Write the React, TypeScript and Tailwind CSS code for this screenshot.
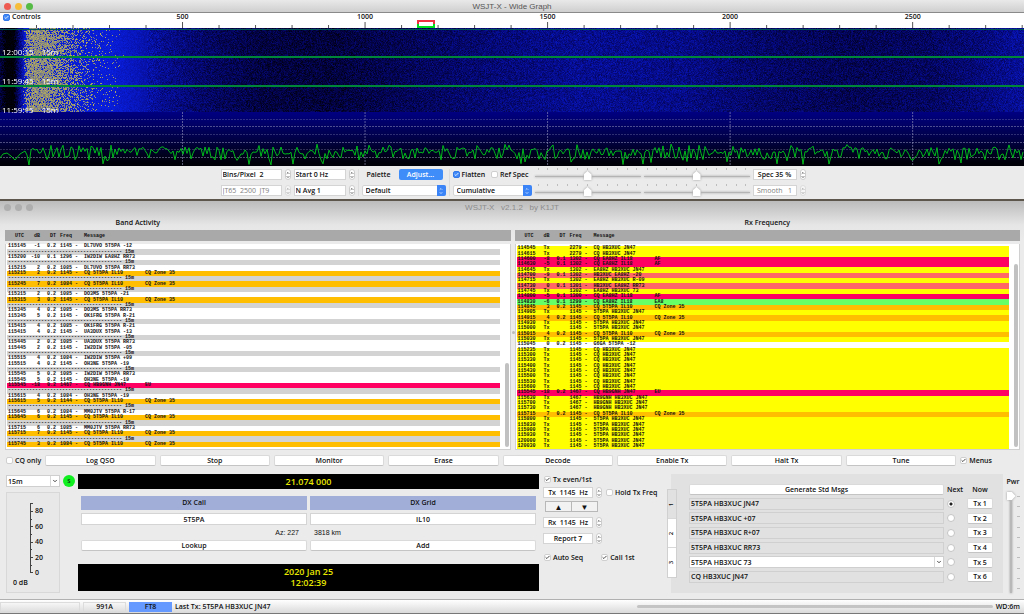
import { useLayoutEffect, useRef } from 'react';
import type { ReactNode } from 'react';
import { Check, ChevronDown, ChevronUp } from 'lucide-react';
import { clsx } from 'clsx';

const MAX_HZ = 2805;
const MINOR_TICKS = Array.from({ length: 28 }, (_, i) => (i + 1) * 100);
const MAJOR_TICKS = [500, 1000, 1500, 2000, 2500];
const SWEEPS = ['12:00:15', '11:59:45', '11:59:15'];

const SEPARATOR = '-'.repeat(38) + ' 15m';

type Tone = 'cq' | 'dxcc' | 'mycall' | 'grid' | 'tx';
type Row = [utc: string, db: string, dt: string, freq: string, message: string, note?: string, tone?: Tone];

const TONES: Record<Tone, string> = {
  cq: 'bg-[#ffbf00]',
  dxcc: 'bg-[#ff0062]',
  mycall: 'bg-[#ff6666]',
  grid: 'bg-[#66ff66]',
  tx: 'bg-[#ffff00]',
};

const cq = (utc: string, db: string, freq: string): Row => [utc, db, '0.2', freq, 'CQ 5T5PA IL10', 'CQ Zone 35', 'cq'];
const tx = (utc: string, freq: string, message: string): Row => [utc, 'Tx', '', freq, message, '', 'tx'];

const BAND_ACTIVITY: (Row | null)[] = [
  ['115145', '-1', '0.2', '1145', 'DL7UVO 5T5PA -12'],
  null,
  ['115200', '-10', '0.1', '1296', 'IW2DIW EA8HZ RR73'],
  null,
  ['115215', '2', '0.2', '1085', 'DL7UVO 5T5PA RR73'],
  cq('115215', '2', '1145'),
  null,
  cq('115245', '7', '1084'),
  null,
  ['115315', '2', '0.2', '1085', 'DO3MS 5T5PA -21'],
  cq('115315', '3', '1145'),
  null,
  ['115345', '4', '0.2', '1085', 'DO3MS 5T5PA RR73'],
  ['115345', '5', '0.2', '1145', 'OK1FRG 5T5PA R-21'],
  null,
  ['115415', '4', '0.2', '1085', 'OK1FRG 5T5PA R-21'],
  ['115415', '4', '0.2', '1145', 'UA3DUX 5T5PA -13'],
  null,
  ['115445', '2', '0.2', '1085', 'UA3DUX 5T5PA RR73'],
  ['115445', '2', '0.2', '1145', 'IW2DIW 5T5PA -05'],
  null,
  ['115515', '4', '0.2', '1084', 'IW2DIW 5T5PA +09'],
  ['115515', '4', '0.2', '1145', 'OH3NE 5T5PA -19'],
  null,
  ['115545', '5', '0.2', '1085', 'IW2DIW 5T5PA RR73'],
  ['115545', '5', '0.2', '1145', 'OH3NE 5T5PA -19'],
  ['115545', '-18', '0.2', '1467', 'CQ HB9GNH JN47', 'EU', 'dxcc'],
  null,
  ['115615', '4', '0.2', '1084', 'OH3NE 5T5PA -19'],
  cq('115615', '5', '1144'),
  null,
  ['115645', '6', '0.2', '1084', 'MM0JTV 5T5PA R-17'],
  cq('115645', '6', '1145'),
  null,
  ['115715', '6', '0.2', '1085', 'MM0JTV 5T5PA RR73'],
  cq('115715', '7', '1145'),
  null,
  cq('115745', '3', '1084'),
];

const RX_FREQUENCY: (Row | null)[] = [
  tx('114545', '2279', 'CQ HB3XUC JN47'),
  tx('114615', '2279', 'CQ HB3XUC JN47'),
  ['114600', '-8', '0.1', '1302', 'CQ EA8HZ IL18', 'AF', 'dxcc'],
  ['114630', '-5', '0.1', '1302', 'CQ EA8HZ IL18', 'AF', 'dxcc'],
  tx('114645', '1302', 'EA8HZ HB3XUC JN47'),
  ['114700', '-9', '0.1', '1302', 'HB3XUC EA8HZ -20', '', 'mycall'],
  tx('114715', '1302', 'EA8HZ HB3XUC R-09'),
  ['114730', '0', '0.1', '1301', 'HB3XUC EA8HZ RR73', '', 'mycall'],
  tx('114745', '1302', 'EA8HZ HB3XUC 73'),
  ['114800', '-5', '0.1', '1300', 'CQ EA8HZ IL18', 'AF', 'dxcc'],
  ['114830', '-6', '0.1', '1299', 'CQ EA8HZ IL18', 'EA8', 'grid'],
  cq('114845', '3', '1145'),
  tx('114905', '1145', '5T5PA HB3XUC JN47'),
  cq('114915', '4', '1145'),
  tx('114930', '1145', '5T5PA HB3XUC JN47'),
  tx('115000', '1145', '5T5PA HB3XUC JN47'),
  cq('115015', '4', '1145'),
  tx('115030', '1145', '5T5PA HB3XUC JN47'),
  ['115045', '0', '0.2', '1145', 'G6GA 5T5PA -12'],
  tx('115235', '1145', 'CQ HB3XUC JN47'),
  tx('115300', '1145', 'CQ HB3XUC JN47'),
  tx('115330', '1145', 'CQ HB3XUC JN47'),
  tx('115400', '1145', 'CQ HB3XUC JN47'),
  tx('115430', '1145', 'CQ HB3XUC JN47'),
  tx('115500', '1145', 'CQ HB3XUC JN47'),
  tx('115530', '1145', 'CQ HB3XUC JN47'),
  tx('115600', '1145', 'CQ HB3XUC JN47'),
  ['115545', '-18', '0.2', '1467', 'CQ HB9GNH JN47', 'EU', 'dxcc'],
  tx('115630', '1467', 'HB9GNH HB3XUC JN47'),
  tx('115700', '1467', 'HB9GNH HB3XUC JN47'),
  tx('115730', '1467', 'HB9GNH HB3XUC JN47'),
  cq('115715', '7', '1145'),
  tx('115800', '1145', '5T5PA HB3XUC JN47'),
  tx('115830', '1145', '5T5PA HB3XUC JN47'),
  tx('115900', '1145', '5T5PA HB3XUC JN47'),
  tx('115930', '1145', '5T5PA HB3XUC JN47'),
  tx('120000', '1145', '5T5PA HB3XUC JN47'),
  tx('120030', '1145', '5T5PA HB3XUC JN47'),
];

const MESSAGES = [
  '5T5PA HB3XUC JN47',
  '5T5PA HB3XUC +07',
  '5T5PA HB3XUC R+07',
  '5T5PA HB3XUC RR73',
  '5T5PA HB3XUC 73',
  'CQ HB3XUC JN47',
];

const BUTTONS = ['Log QSO', 'Stop', 'Monitor', 'Erase', 'Decode', 'Enable Tx', 'Halt Tx', 'Tune'];

// small seeded generator so the noise is the same on every render
function makeRandom(seed: number) {
  let s = seed;
  return () => {
    s = (s * 1664525 + 1013904223) >>> 0;
    return s / 4294967296;
  };
}

// [x, level] pairs, level 0 = black, 1 = full blue
const BLUE_PROFILE = [
  [0, 0.25], [4, 0.1], [6, 0], [13, 0], [19, 0.5], [25, 0.9], [110, 0.9], [135, 0.78], [165, 0.58],
  [210, 0.4], [260, 0.28], [330, 0.25], [400, 0.35], [480, 0.47], [580, 0.6], [680, 0.56],
  [760, 0.43], [850, 0.35], [930, 0.4], [980, 0.5], [1024, 0.64],
];

const YELLOW_PROFILE = [
  [0, 0], [22, 0], [27, 0.75], [36, 0.92], [48, 0.82], [62, 0.6], [78, 0.32], [98, 0.1], [125, 0], [1024, 0],
];

function sample(profile: number[][], x: number) {
  const i = profile.findIndex(([px]) => px > x);
  if (i < 1) return profile[profile.length - 1][1];
  const [x0, v0] = profile[i - 1];
  const [x1, v1] = profile[i];
  return v0 + ((x - x0) / (x1 - x0)) * (v1 - v0);
}

function Waterfall() {
  const ref = useRef<HTMLCanvasElement>(null);

  useLayoutEffect(() => {
    const ctx = ref.current?.getContext('2d');
    if (!ctx) return;
    const img = ctx.createImageData(1024, 84);
    const random = makeRandom(7);

    for (let y = 0; y < 84; y++) {
      for (let x = 0; x < 1024; x++) {
        const o = (y * 1024 + x) * 4;
        const blue = sample(BLUE_PROFILE, x);
        const spread = blue > 0.7 ? 0.1 : 0.22;
        const v = blue === 0 ? random() * 0.08 : Math.max(0, blue + (random() + random() - 1) * spread);
        let rgb = [v * 10, v * v * 36, Math.min(225, v * 240)];
        if (random() < sample(YELLOW_PROFILE, x)) {
          const k = 0.55 + random() * 0.45;
          rgb = [rgb[0] + (184 - rgb[0]) * k, rgb[1] + (176 - rgb[1]) * k, rgb[2] + (92 - rgb[2]) * k];
        }
        if (y === 1) rgb = [0, 84, 84];
        if (y === 28 || y === 29 || y === 57 || y === 58) rgb = [0, 134, 56];
        img.data.set([rgb[0], rgb[1], rgb[2], 255], o);
      }
    }
    ctx.putImageData(img, 0, 0);
  }, []);

  return (
    <div className='relative'>
      <canvas ref={ref} width={1024} height={84} className='block h-[84px] w-full' />
      <div className='absolute inset-x-0 top-0 grid auto-rows-[29px] text-[8px] font-medium text-white'>
        {SWEEPS.map((time) => (
          <p key={time} className='flex items-end gap-[8px] pl-[2px] leading-[11px]'>
            <span>{time}</span>
            <span>15m</span>
          </p>
        ))}
      </div>
    </div>
  );
}

function spectrumPath() {
  const random = makeRandom(21);
  const points = ['M0 46', 'L3 42', 'L7 41', 'L11 44', 'L15 48', 'L20 42', 'L25 39', 'L27 43', 'L29 53', 'L31 38'];
  for (let x = 33; x <= 1024; x += 2) {
    const r = random();
    let y = 35 + random() * 7;
    if (r > 0.62) y = 41 + random() * 7;
    if (r > 0.91) y = 46 + random() * 7;
    if (r < 0.06) y = 32 + random() * 3;
    points.push(`L${x} ${y.toFixed(1)}`);
  }
  return points.join(' ');
}

function Spectrum() {
  return (
    <svg viewBox='0 0 1024 54' preserveAspectRatio='none' className='block h-[54px] w-full'>
      <defs>
        <linearGradient id='floor' x1='0' y1='0' x2='0' y2='1'>
          <stop offset='0' stopColor='#000082' />
          <stop offset='0.5' stopColor='#000046' />
          <stop offset='0.95' stopColor='#000008' />
        </linearGradient>
      </defs>
      <rect width='1024' height='54' fill='url(#floor)' />
      <g stroke='#9a9ac0' strokeWidth='1' strokeDasharray='2 1'>
        {[8, 15, 23, 31, 38, 46].map((y, i) => (
          <line key={y} x1='0' x2='1024' y1={y - 0.5} y2={y - 0.5} opacity={i % 2 ? 0.5 : 0.3} />
        ))}
        {MAJOR_TICKS.map((hz) => (
          <line key={hz} x1={(hz / MAX_HZ) * 1024} x2={(hz / MAX_HZ) * 1024} y1='0' y2='54' opacity='0.6' />
        ))}
      </g>
      <path d={spectrumPath()} fill='none' stroke='#00cc1a' strokeWidth='0.9' />
    </svg>
  );
}

function Ruler() {
  return (
    <div className='relative h-[15px] overflow-hidden bg-white'>
      <svg className='absolute inset-0 h-full w-full' stroke='#555'>
        {MINOR_TICKS.map((hz) => (
          <line key={hz} x1={`${(hz / MAX_HZ) * 100}%`} x2={`${(hz / MAX_HZ) * 100}%`} y1={hz % 500 ? 12 : 9} y2='15' />
        ))}
      </svg>
      {MAJOR_TICKS.map((hz) => (
        <span
          key={hz}
          className='absolute top-0 -translate-x-1/2 leading-[8px]'
          style={{ left: `${(hz / MAX_HZ) * 100}%` }}
        >
          {hz}
        </span>
      ))}
      <svg viewBox='0 0 18 8' fill='none' strokeWidth='2' className='absolute top-[7px] left-[40.7%] h-[8px] w-[18px] bg-white'>
        <path d='M1 4V1H17V4' stroke='#f03040' />
        <path d='M1 4V7H17V4' stroke='#00e020' />
      </svg>
      <label className='absolute top-0 left-[3px] flex items-center gap-[2px] bg-white pr-1 leading-[8px]'>
        <Tick checked blue />
        Controls
      </label>
    </div>
  );
}

function Tick({ checked = false, blue = false }: { checked?: boolean; blue?: boolean }) {
  return (
    <span className='relative flex size-[7px] shrink-0'>
      <input
        type='checkbox'
        defaultChecked={checked}
        className={clsx(
          'size-[7px] appearance-none rounded-[2px] border',
          blue ? 'border-[#3478e8] bg-[#3f8af8]' : 'border-[#cfcfcf] bg-white',
        )}
      />
      {checked && (
        <Check
          strokeWidth={4}
          className={clsx('pointer-events-none absolute inset-px size-[5px]', blue ? 'text-white' : 'text-[#222]')}
        />
      )}
    </span>
  );
}

function CheckLabel({ children, ...props }: { children: ReactNode; checked?: boolean; blue?: boolean }) {
  return (
    <label className='flex items-center gap-[2px] whitespace-nowrap'>
      <Tick {...props} />
      {children}
    </label>
  );
}

function Stepper({ disabled = false }: { disabled?: boolean }) {
  return (
    <span
      className={clsx(
        'flex h-[11px] w-[6px] shrink-0 flex-col items-center justify-center rounded-[3px] border border-[#cdcdcd] bg-white',
        disabled && 'opacity-50',
      )}
    >
      <ChevronUp strokeWidth={4} className='size-[4px]' />
      <ChevronDown strokeWidth={4} className='size-[4px]' />
    </span>
  );
}

function Spin({ label, value, className, disabled = false }: { label: string; value: string; className: string; disabled?: boolean }) {
  return (
    <span className='flex items-center gap-[3px]'>
      <input
        aria-label={label}
        defaultValue={value}
        disabled={disabled}
        className={clsx('h-[11px] border border-[#d4d4d4] bg-white px-px', disabled && 'font-normal text-[#808080]', className)}
      />
      <Stepper disabled={disabled} />
    </span>
  );
}

function BlueSelect({ label, value, className }: { label: string; value: string; className: string }) {
  return (
    <span className={clsx('relative flex h-[11px] rounded-[2px] border border-[#d4d4d4] bg-white', className)}>
      <select aria-label={label} className='w-full appearance-none pl-[3px]'>
        <option>{value}</option>
      </select>
      <span className='pointer-events-none absolute -inset-y-px -right-px flex w-[9px] flex-col items-center justify-center rounded-r-[2px] bg-[#3a84f7] text-white'>
        <ChevronUp strokeWidth={4} className='size-[4px]' />
        <ChevronDown strokeWidth={4} className='size-[4px]' />
      </span>
    </span>
  );
}

function Combo({ label, value }: { label: string; value: string }) {
  return (
    <span className='relative flex h-[12px] w-full border border-[#cfcfcf] bg-white'>
      <select aria-label={label} className='w-full appearance-none pl-px'>
        <option>{value}</option>
      </select>
      <span className='pointer-events-none absolute inset-y-0 right-0 flex w-[9px] items-center justify-center border-l border-[#d8d8d8]'>
        <ChevronDown strokeWidth={3} className='size-[6px]' />
      </span>
    </span>
  );
}

function Slider({ label }: { label: string }) {
  return (
    <span className='flex h-[13px] w-[106px] flex-col justify-between'>
      <span className='flex justify-between px-[3px]'>
        {Array.from({ length: 11 }, (_, i) => (
          <i key={i} className='h-[2px] w-px bg-[#bdbdbd]' />
        ))}
      </span>
      <input
        type='range'
        aria-label={label}
        className='h-[9px] w-full appearance-none bg-transparent [filter:drop-shadow(0_0_1px_#999)] [&::-webkit-slider-runnable-track]:h-px [&::-webkit-slider-runnable-track]:bg-[#b4b4b4] [&::-webkit-slider-thumb]:-mt-[5px] [&::-webkit-slider-thumb]:h-[9px] [&::-webkit-slider-thumb]:w-[8px] [&::-webkit-slider-thumb]:appearance-none [&::-webkit-slider-thumb]:bg-white [&::-webkit-slider-thumb]:[clip-path:polygon(50%_0,100%_40%,100%_100%,0_100%,0_40%)]'
      />
    </span>
  );
}

function Button({ children, className }: { children: ReactNode; className?: string }) {
  return (
    <button className={clsx('h-[11px] rounded-[2px] border border-[#dadada] border-b-[#c4c4c4] bg-white leading-[9px]', className)}>
      {children}
    </button>
  );
}

function WideGraphControls() {
  return (
    <div className='flex h-[33px] items-center justify-center bg-[#ebebeb] pl-[2px]'>
      <div className='flex flex-col gap-[5px]'>
        <Spin label='Bins per pixel' value='Bins/Pixel  2' className='w-[61px] whitespace-pre' />
        <Spin label='Mode split' value='JT65  2500  JT9' className='w-[61px] whitespace-pre' disabled />
      </div>
      <div className='ml-[3px] flex flex-col gap-[5px]'>
        <Spin label='Start frequency' value='Start 0 Hz' className='w-[52px]' />
        <Spin label='Averages' value='N Avg 1' className='w-[52px]' />
      </div>
      <div className='ml-[3px] flex flex-col gap-[5px] border-x border-[#dcdcdc] px-[3px]'>
        <div className='flex items-center justify-between pr-[3px] pl-[5px]'>
          <span>Palette</span>
          <button className='h-[11px] w-[44px] rounded-[2px] bg-[#3f8df9] leading-[9px] text-white'>Adjust...</button>
        </div>
        <BlueSelect label='Palette' value='Default' className='w-[84px]' />
      </div>
      <div className='ml-[3px] flex flex-col gap-[5px]'>
        <div className='flex h-[11px] items-center justify-between pr-[3px]'>
          <CheckLabel checked blue>Flatten</CheckLabel>
          <CheckLabel>Ref Spec</CheckLabel>
        </div>
        <BlueSelect label='Spectrum mode' value='Cumulative' className='w-[79px]' />
      </div>
      <div className='mx-[3px] grid grid-cols-2 gap-x-[3px] gap-y-[3px]'>
        <Slider label='Waterfall gain' />
        <Slider label='Waterfall zero' />
        <Slider label='Spectrum gain' />
        <Slider label='Spectrum zero' />
      </div>
      <div className='flex flex-col gap-[5px]'>
        <Spin label='Spectrum height' value='Spec 35 %' className='w-[44px] text-center' />
        <Spin label='Smoothing' value='Smooth   1' className='w-[44px] text-center whitespace-pre' disabled />
      </div>
    </div>
  );
}

const LOG_GRID = 'grid grid-cols-[21px_11px_16px_16px_12px_61px_1fr] pl-px';

type LogProps = { title: string; rows: (Row | null)[]; titleClass?: string; thumb: string; body: string };

function Log({ title, rows, titleClass, thumb, body }: LogProps) {
  return (
    <section className='relative flex min-w-0 flex-1 flex-col'>
      <h2 className={clsx('flex h-[17px] items-center justify-center pt-px', titleClass)}>{title}</h2>
      <table className="flex flex-col gap-[3px] font-['Liberation_Mono',monospace] text-[5px] leading-[5px] font-bold">
        <thead className='bg-[#a9a9a9] px-[2px]'>
          <tr className={clsx(LOG_GRID, 'h-[11px] items-center pt-px')}>
            <th className='pr-[5px] text-right'>UTC</th>
            <th className='text-right'>dB</th>
            <th className='text-right'>DT</th>
            <th className='text-right'>Freq</th>
            <th />
            <th className='text-left'>Message</th>
          </tr>
        </thead>
        <tbody className={clsx('flex h-[206px] flex-col border border-t-0 border-[#d0d0d0] bg-white pr-[10px] pl-px', body)}>
          {rows.map((row, i) =>
            row ? (
              <tr key={i} className={clsx(LOG_GRID, 'min-h-0 flex-1 items-center', row[6] && TONES[row[6]])}>
                <td>{row[0]}</td>
                <td className='text-right'>{row[1]}</td>
                <td className='text-right'>{row[2]}</td>
                <td className='text-right'>{row[3]}</td>
                <td className='pl-[3px]'>-</td>
                <td className='whitespace-nowrap'>{row[4]}</td>
                <td>{row[5]}</td>
              </tr>
            ) : (
              <tr key={i} className='flex min-h-0 flex-1 items-center bg-[#d3d3d3] pl-px'>
                <td className='whitespace-nowrap'>{SEPARATOR}</td>
              </tr>
            ),
          )}
        </tbody>
      </table>
      <span className={clsx('absolute right-[2px] bottom-[3px] w-[4px] rounded-full bg-[#c1c1c1]', thumb)} />
    </section>
  );
}

function Meter() {
  return (
    <div className='flex h-[101px] flex-col border border-[#d8d8d8] bg-[#e8e8e8] pt-[8px] pl-[6px]'>
      <div className='flex gap-px pl-[16px]'>
        <svg width='5' height='76' stroke='#444' fill='none' className='mt-px'>
          <path d='M1.5 1V71M1 1.5H4M1 9.5H4M1 17.5H3M1 24.5H4M1 32.5H3M1 40.5H4M1 47.5H3M1 55.5H4M1 63.5H3M1 70.5H4' />
        </svg>
        <div className='flex h-[74px] flex-col justify-between pt-[5px] leading-[9px]'>
          {[80, 60, 40, 20, 0].map((n) => (
            <span key={n} className='h-[7px]'>{n}</span>
          ))}
        </div>
      </div>
      <span>0 dB</span>
    </div>
  );
}

function DxPanel() {
  return (
    <div className='flex min-w-0 flex-1 flex-col'>
      <p className='bg-black py-px text-center text-[9px] leading-[13px] text-[#e8e800]'>21.074 000</p>
      <div className='mt-[7px] mb-[13px] grid grid-cols-2 gap-[3px] px-[3px] text-center'>
        <label htmlFor='dx-call' className='bg-[#a0aed8] leading-[14px]'>DX Call</label>
        <label htmlFor='dx-grid' className='bg-[#a0aed8] leading-[14px]'>DX Grid</label>
        <input id='dx-call' defaultValue='5T5PA' className='h-[12px] min-w-0 border border-[#d4d4d4] bg-white text-center' />
        <input id='dx-grid' defaultValue='IL10' className='h-[12px] min-w-0 border border-[#d4d4d4] bg-white text-center' />
        <span className="pr-[8px] text-right font-['Liberation_Sans',sans-serif] font-normal">Az: 227</span>
        <span className="pl-[4px] text-left font-['Liberation_Sans',sans-serif] font-normal">3818 km</span>
        <Button>Lookup</Button>
        <Button>Add</Button>
      </div>
      <div className='flex flex-col items-center gap-px bg-black py-[3px] text-[9px] leading-[10px] text-[#e8e800]'>
        <span>2020 Jan 25</span>
        <span>12:02:39</span>
      </div>
    </div>
  );
}

function TxControls() {
  return (
    <div className='flex w-[120px] flex-col gap-[3px] pt-px'>
      <div className='pl-px'>
        <CheckLabel checked>Tx even/1st</CheckLabel>
      </div>
      <div className='flex items-center gap-[4px]'>
        <Spin label='Tx frequency' value='Tx  1145  Hz' className='w-[50px] whitespace-pre text-center' />
        <CheckLabel>Hold Tx Freq</CheckLabel>
      </div>
      <div className='mx-[2px] flex h-[11px] w-[53px] border border-[#b8b8b8] bg-[#f2f2f2] text-[8px] leading-[9px]'>
        <button aria-label='Tx to Rx frequency' className='flex-1 border-r border-[#b8b8b8]'>▲</button>
        <button aria-label='Rx to Tx frequency' className='flex-1'>▼</button>
      </div>
      <div className='flex flex-col gap-[5px] pt-[2px]'>
        <Spin label='Rx frequency' value='Rx  1145  Hz' className='w-[50px] whitespace-pre text-center' />
        <Spin label='Report' value='Report 7' className='w-[50px] text-center' />
      </div>
      <div className='mt-[6px] flex gap-[18px] pl-px'>
        <CheckLabel checked>Auto Seq</CheckLabel>
        <CheckLabel checked>Call 1st</CheckLabel>
      </div>
    </div>
  );
}

function Messages() {
  return (
    <div className='relative w-[332px] bg-[#e1e1e1] pt-[8px] pr-[10px] pl-[18px]'>
      <div className='absolute top-[15px] -left-[4px] flex w-[10px] flex-col border border-[#d0d0d0] text-[6px]'>
        {[1, 2, 3].map((n) => (
          <button
            key={n}
            className={clsx(
              'flex h-[29px] items-center justify-center border-b border-[#d8d8d8] last:border-b-0',
              n === 1 ? 'bg-[#e1e1e1]' : 'bg-white',
            )}
          >
            <span className='-rotate-90'>{n}</span>
          </button>
        ))}
      </div>
      <div className='grid h-[102px] auto-rows-fr grid-cols-[1fr_17px_26px] items-center gap-x-[3px]'>
        <Button>Generate Std Msgs</Button>
        <span>Next</span>
        <span className='text-center'>Now</span>
        {MESSAGES.map((text, i) => (
          <MessageRow key={text} text={text} index={i + 1} />
        ))}
      </div>
    </div>
  );
}

function MessageRow({ text, index }: { text: string; index: number }) {
  return (
    <>
      {index === 5 ? (
        <Combo label='Tx 5 message' value={text} />
      ) : (
        <input
          aria-label={`Tx ${index} message`}
          defaultValue={text}
          className='h-[12px] min-w-0 border border-[#d0d0d0] bg-[#e1e1e1] px-px'
        />
      )}
      <input
        type='radio'
        name='next'
        aria-label={`Next Tx ${index}`}
        defaultChecked={index === 1}
        className='size-[8px] appearance-none rounded-full border border-[#c4c4c4] bg-white checked:bg-[radial-gradient(#222_0_1px,#fff_2px)]'
      />
      <Button>Tx {index}</Button>
    </>
  );
}

function Power() {
  return (
    <label className='flex w-[20px] flex-col items-center gap-[6px] pt-[3px]'>
      Pwr
      <span className='flex gap-px'>
        <input
          type='range'
          defaultValue={100}
          className='h-[101px] w-[9px] appearance-none bg-[linear-gradient(to_right,transparent_3px,#b8b8b8_3px,#b8b8b8_5px,transparent_5px)] [filter:drop-shadow(0_0_1px_#999)] [direction:rtl] [writing-mode:vertical-lr] [&::-webkit-slider-thumb]:h-[8px] [&::-webkit-slider-thumb]:w-[9px] [&::-webkit-slider-thumb]:appearance-none [&::-webkit-slider-thumb]:bg-white [&::-webkit-slider-thumb]:[clip-path:polygon(0_0,60%_0,100%_50%,60%_100%,0_100%)]'
        />
        <span className='flex flex-col justify-between py-[4px]'>
          {Array.from({ length: 10 }, (_, i) => (
            <i key={i} className='h-px w-[3px] bg-[#bdbdbd]' />
          ))}
        </span>
      </span>
    </label>
  );
}

function TrafficLights({ colors }: { colors: string[] }) {
  return (
    <div className='absolute left-[4px] flex gap-[4px]'>
      {colors.map((c, i) => (
        <span key={i} className={clsx('size-[7px] rounded-full', c)} />
      ))}
    </div>
  );
}

function WideGraph() {
  return (
    <section>
      <header className='relative flex h-[13px] items-center justify-center border-b border-[#8a8a8a] bg-linear-to-b from-[#e9e9e9] to-[#cfcfcf]'>
        <TrafficLights colors={['bg-[#ee5b50]', 'bg-[#f6bd3b]', 'bg-[#55bb45]']} />
        <h1 className="font-['Liberation_Sans',sans-serif] text-[8px] font-normal text-[#555]">WSJT-X - Wide Graph</h1>
      </header>
      <Ruler />
      <Waterfall />
      <Spectrum />
      <WideGraphControls />
    </section>
  );
}

function MainWindow() {
  return (
    <section className='flex flex-col bg-[linear-gradient(#bcbcbc,#e6e6e6_24px,#ebebeb_40px)]'>
      <header className='relative flex h-[12px] items-center justify-center'>
        <TrafficLights colors={['bg-[#aeaeae]', 'bg-[#aeaeae]', 'bg-[#aeaeae]']} />
        <h1 className="font-['Liberation_Sans',sans-serif] text-[8px] font-normal whitespace-pre text-[#8c8c8c]">
          {'WSJT-X   v2.1.2   by K1JT'}
        </h1>
      </header>
      <main className='flex flex-col'>
        <div className='relative flex gap-[4px] pr-[4px] pl-[5px]'>
          <Log title='Band Activity' rows={BAND_ACTIVITY} titleClass='pr-[240px]' thumb='h-[84px]' body='pb-[2px]' />
          <Log title='Rx Frequency' rows={RX_FREQUENCY} thumb='h-[183px]' body='pt-[2px]' />
          <span className='absolute top-[118px] left-1/2 size-[3px] rounded-full bg-[#bbb]' />
        </div>

        <div className='flex h-[20px] items-center gap-[4px] pr-[32px] pl-[6px]'>
          <CheckLabel>CQ only</CheckLabel>
          {BUTTONS.map((name) => (
            <Button key={name} className='flex-1'>{name}</Button>
          ))}
          <CheckLabel checked>Menus</CheckLabel>
        </div>

        <div className='flex pt-[4px] pr-px pl-[6px]'>
          <div className='flex w-[54px] flex-col justify-between pt-px'>
            <Combo label='Band' value='15m' />
            <Meter />
          </div>
          <div className='w-[18px] px-[3px] pt-px'>
            <button className='size-[12px] rounded-full bg-[#10f020] text-[6px] leading-[12px]'>S</button>
          </div>
          <DxPanel />
          <div className='ml-[4px] flex'>
            <TxControls />
            <div className='ml-[8px] flex'>
              <Messages />
              <Power />
            </div>
          </div>
        </div>
      </main>

      <footer className='mt-[6px] flex h-[15px] items-center gap-[3px] border-y border-t-[#b0b0b0] border-b-[#777] bg-linear-to-b from-white to-[#dadada] pr-[4px]'>
        <span className='h-[10px] w-[80px] border border-[#dcdcdc]' />
        <span className='w-[43px] border border-[#dcdcdc] text-center leading-[8px]'>991A</span>
        <span className='w-[43px] bg-[#6699ff] text-center leading-[10px]'>FT8</span>
        <span className='flex-1'>Last Tx: 5T5PA HB3XUC JN47</span>
        <span className='h-[3px] w-[356px] rounded-full bg-[#c4c4c4]' />
        <span>WD:6m</span>
      </footer>
    </section>
  );
}

export default function App() {
  return (
    <div className="bg-[#ebebeb] font-['Open_Sans',sans-serif] text-[7px] leading-[9px] font-semibold text-[#111]">
      <WideGraph />
      <div className='h-[2px] bg-[#5c564c]' />
      <MainWindow />
    </div>
  );
}
